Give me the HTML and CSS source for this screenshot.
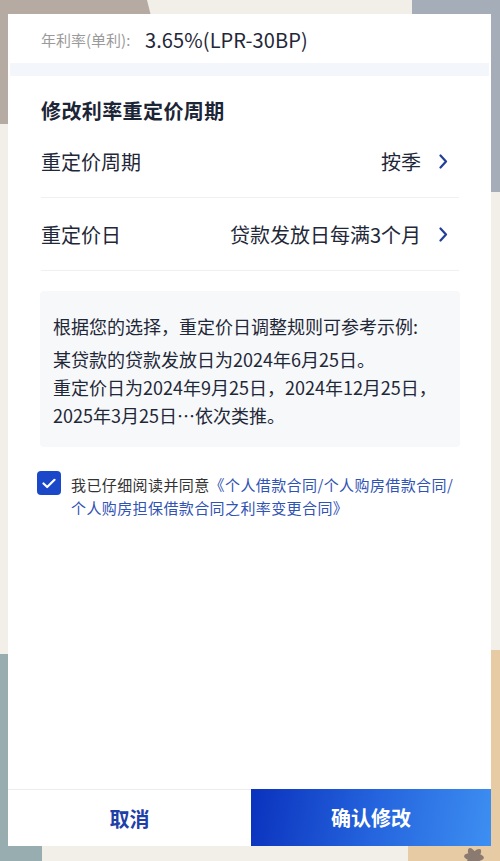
FILE: index.html
```html
<!DOCTYPE html>
<html lang="zh-CN">
<head>
<meta charset="utf-8">
<title>修改利率重定价周期</title>
<link rel="stylesheet" href="styles.css">
</head>
<body>
<div class="page">
  <div class="deco deco-tl"></div>
  <div class="deco deco-tl-strip"></div>
  <div class="deco deco-tr"></div>
  <div class="deco deco-bl"></div>
  <div class="deco deco-br"></div>
  <svg class="deco flower" width="40" height="30" viewBox="0 0 40 30">
    <g fill="#8a7a70">
      <ellipse cx="20" cy="18" rx="4" ry="10" transform="rotate(-30 20 18)"/>
      <ellipse cx="20" cy="18" rx="4" ry="10" transform="rotate(40 20 18)"/>
      <ellipse cx="20" cy="18" rx="4" ry="10" transform="rotate(95 20 18)"/>
    </g>
  </svg>

  <div class="card">
    <div class="rate-row">
      <span class="rate-label">年利率(单利):</span>
      <span class="rate-value">3.65%(LPR-30BP)</span>
    </div>
    <div class="band"></div>

    <div class="section">
      <div class="title">修改利率重定价周期</div>
      <div class="row">
        <span class="row-label">重定价周期</span>
        <span class="row-value">按季
          <svg class="chev" width="9" height="15" viewBox="0 0 9 15"><path d="M1.5 1.5 L7 7.5 L1.5 13.5" fill="none" stroke="#213f98" stroke-width="2.2" stroke-linecap="round" stroke-linejoin="round"/></svg>
        </span>
      </div>
      <div class="row">
        <span class="row-label">重定价日</span>
        <span class="row-value">贷款发放日每满3个月
          <svg class="chev" width="9" height="15" viewBox="0 0 9 15"><path d="M1.5 1.5 L7 7.5 L1.5 13.5" fill="none" stroke="#213f98" stroke-width="2.2" stroke-linecap="round" stroke-linejoin="round"/></svg>
        </span>
      </div>

      <div class="info">
        <p class="info-head">根据您的选择，重定价日调整规则可参考示例:</p>
        <p class="info-body">某贷款的贷款发放日为2024年6月25日。<br>重定价日为2024年9月25日，2024年12月25日，<br>2025年3月25日…依次类推。</p>
      </div>
    </div>

    <div class="agree">
      <span class="checkbox">
        <svg width="14" height="11" viewBox="0 0 14 11"><path d="M1.5 5.5 L5.2 9 L12.5 1.8" fill="none" stroke="#fff" stroke-width="2.2" stroke-linecap="round" stroke-linejoin="round"/></svg>
      </span>
      <p class="agree-text">我已仔细阅读并同意<span class="link">《个人借款合同/个人购房借款合同/<br>个人购房担保借款合同之利率变更合同》</span></p>
    </div>

    <div class="spacer"></div>

    <div class="actions">
      <div class="btn btn-cancel">取消</div>
      <div class="btn btn-ok">确认修改</div>
    </div>
  </div>
</div>
</body>
</html>
```

FILE: styles.css
```css
* { box-sizing: border-box; }
html, body { margin: 0; padding: 0; }
body {
  font-family: "Noto Sans CJK SC", "Noto Sans", sans-serif;
  background: #f2eee8;
  color: #1f2838;
}
.page {
  position: relative;
  width: 500px;
  height: 861px;
  overflow: hidden;
  background: #f2eee8;
  padding: 14px 9px 15px 8px;
}
.deco { position: absolute; }
.deco-tl {
  left: 0; top: 0; width: 152px; height: 20px;
  background: #b6aba3;
  clip-path: polygon(0 0, 147px 0, 152px 20px, 0 20px);
}
.deco-tl-strip {
  left: 0; top: 0; width: 12px; height: 124px;
  background: #b6aba3;
}
.deco-tr {
  right: 0; top: 0; width: 88px; height: 192px;
  background: #a4adb8;
}
.deco-bl {
  left: 0; top: 654px; width: 42px; height: 220px;
  background: #98adb0;
  border-top-right-radius: 10px;
}
.deco-br {
  right: 0; top: 650px; width: 92px; height: 220px;
  background: #e7cba5;
  border-top-left-radius: 4px;
}
.flower { right: 6px; bottom: -8px; }

.card {
  position: relative;
  height: 832px;
  background: #fff;
  display: flex;
  flex-direction: column;
}
.rate-row {
  height: 49px;
  display: flex;
  align-items: center;
  padding-left: 33px;
  padding-top: 1px;
}
.rate-label {
  font-size: 15px;
  color: #9a9a9a;
  width: 104px;
}
.rate-value {
  font-size: 20px;
  color: #1f2838;
  letter-spacing: 0.1px;
}
.band {
  height: 13px;
  margin: 0 2px;
  background: #f3f6fb;
}
.section {
  padding: 0 32px 0 33px;
}
.title {
  margin-top: 21px;
  font-size: 20px;
  line-height: 28px;
  font-weight: 700;
  color: #1c2536;
  letter-spacing: 0.4px;
}
.row {
  height: 73px;
  border-bottom: 1px solid #eff0f2;
  display: flex;
  align-items: center;
  justify-content: space-between;
  padding-right: 11px;
}
.row-label {
  font-size: 20px;
  color: #1f2838;
}
.row-value {
  font-size: 20px;
  color: #1f2838;
  display: flex;
  align-items: center;
  gap: 18px;
}
.chev { display: block; }
.info {
  margin-top: 20px;
  background: #f7f8fa;
  border-radius: 4px;
  padding: 21px 8px 18px 13px;
  margin-left: -1px;
  margin-right: -1px;
}
.info p {
  margin: 0;
  font-size: 18px;
  line-height: 28px;
  color: #1f2838;
}
.info-head { margin-bottom: 5px !important; }
.agree {
  margin-top: 24px;
  padding-left: 29px;
  padding-right: 26px;
  display: flex;
  align-items: flex-start;
  gap: 10px;
}
.checkbox {
  flex: none;
  width: 24px;
  height: 24px;
  border-radius: 4px;
  background: #1a48c9;
  display: flex;
  align-items: center;
  justify-content: center;
}
.agree-text {
  margin: 2px 0 0;
  font-size: 15px;
  line-height: 23px;
  color: #333;
  letter-spacing: 0.4px;
}
.link { color: #3153b3; }
.spacer { flex: 1; }
.actions {
  height: 57px;
  border-top: 1px solid #ececec;
  display: flex;
}
.btn {
  display: flex;
  align-items: center;
  justify-content: center;
  font-size: 20px;
  font-weight: 700;
}
.btn-cancel {
  width: 243px;
  color: #1e40a8;
  background: #fff;
}
.btn-ok {
  flex: 1;
  color: #fff;
  background: linear-gradient(100deg, #0a32bd 0%, #2463dd 50%, #3d8ff2 100%);
  margin-top: -1px;
}
```
